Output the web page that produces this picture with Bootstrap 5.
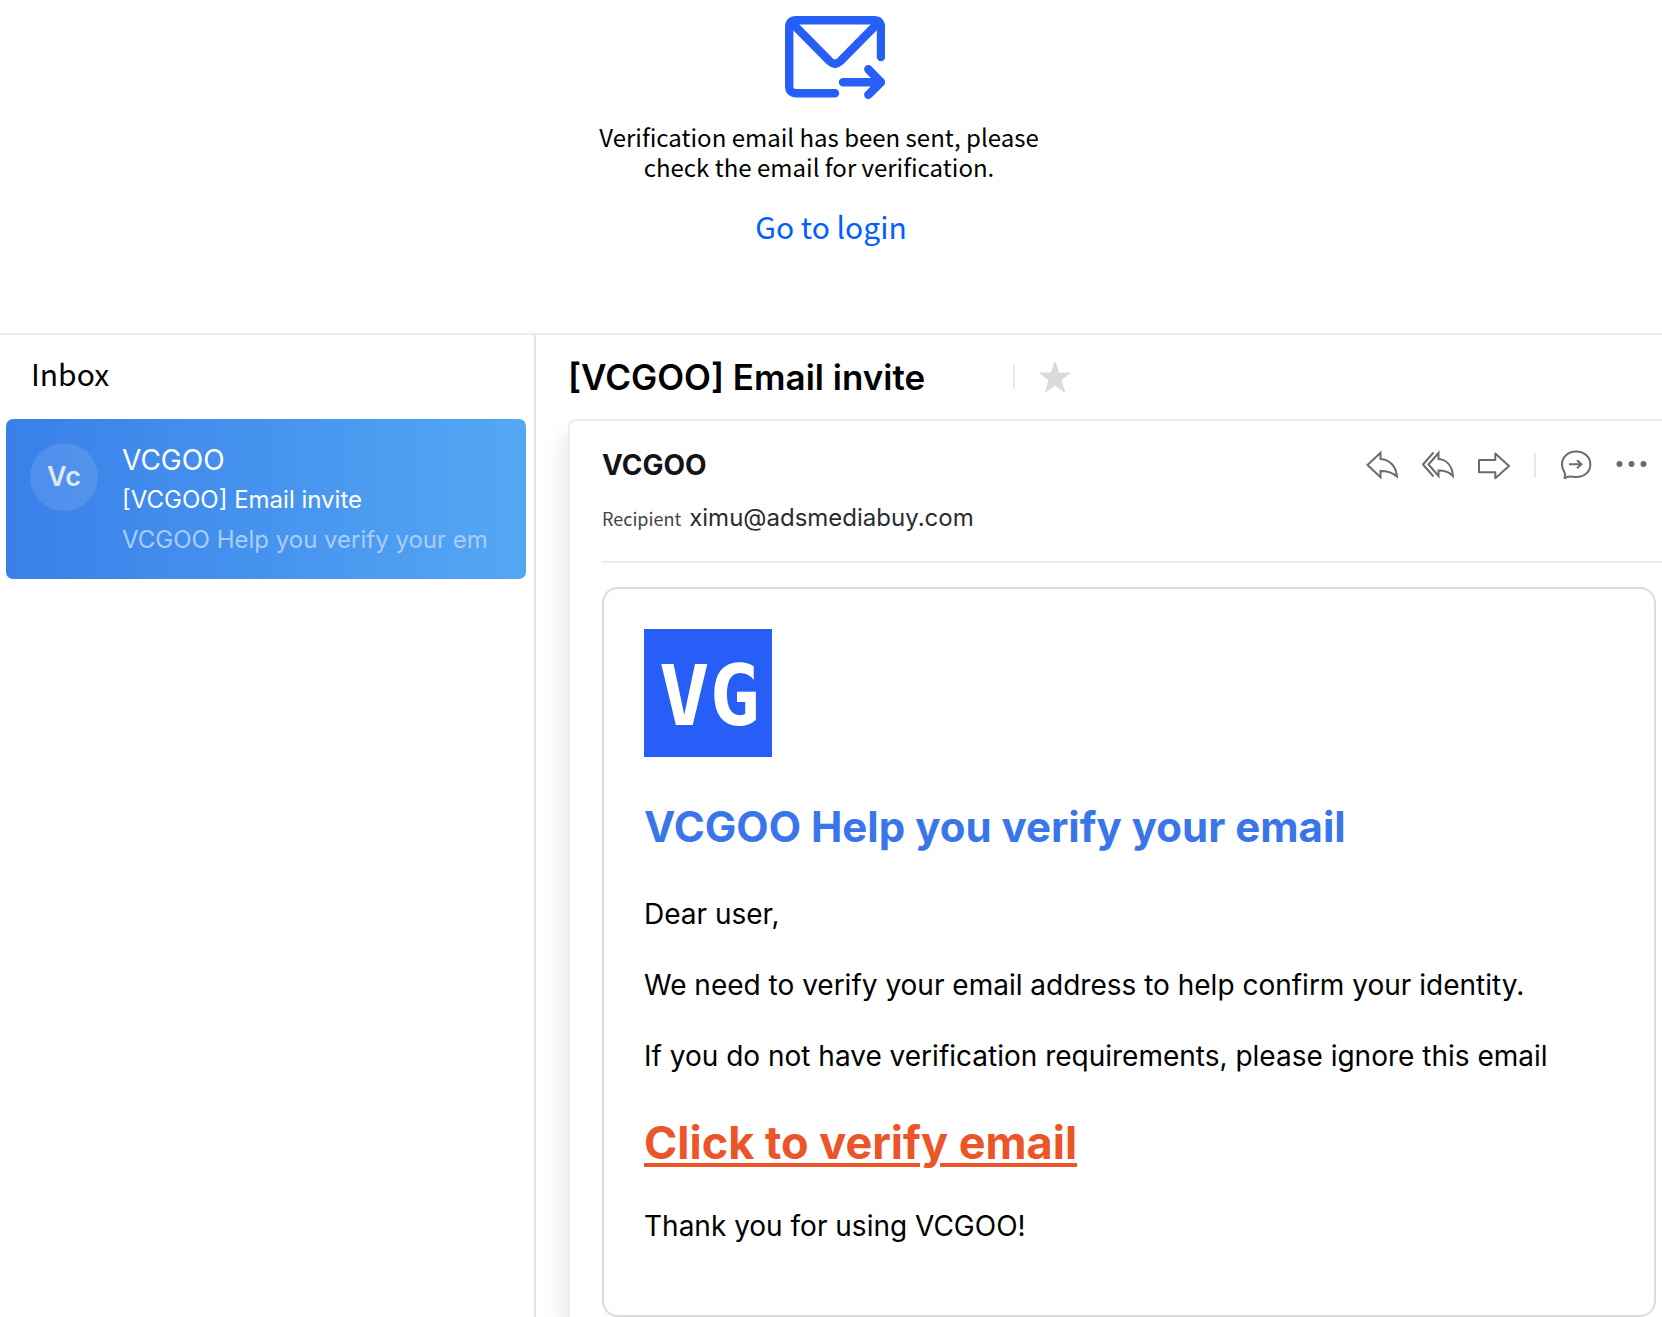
<!DOCTYPE html>
<html lang="en">
<head>
<meta charset="utf-8">
<meta name="viewport" content="width=device-width, initial-scale=1">
<title>Verify your email</title>
<link href="https://cdn.jsdelivr.net/npm/bootstrap@5.3.0/dist/css/bootstrap.min.css" rel="stylesheet">
<style>
body { font-family: Inter, "Noto Sans", sans-serif; color: #000; background: #fff; }
.cjk { font-family: "Noto Sans CJK SC", "Noto Sans", sans-serif; }
.notice { padding: 15px 0 87px; border-bottom: 2px solid #ececec; }
.notice-icon { width: 100px; height: 84px; }
.notice-text { font-size: 24px; line-height: 30px; margin: 23px 0 24px; }
.notice-link { font-size: 30px; line-height: 40px; color: #0060ff; }
.sidebar { flex: 0 0 536px; border-right: 2px solid #e4e4e6; padding: 18px 8px 0 6px; }
.sidebar-title { font-size: 30px; line-height: 40px; margin: 0 0 26px; padding-left: 25px; }
.mail-item { padding: 21px 24px 19px; border-radius: 7px; color: #fff; background: linear-gradient(90deg, #3980e9, #4693ef 50%, #54a8f3); }
.mail-item:hover { color: #fff; }
.avatar { flex: 0 0 68px; height: 68px; margin-top: 3px; font-size: 27px; font-weight: 600; color: #dde9fc; background: rgba(255,255,255,.11); }
.item-from { font-size: 28px; line-height: 40px; }
.item-line { font-size: 24px; line-height: 40px; }
.item-preview { color: #a9cdf8; }
.reader { padding: 20px 0 0 32px; overflow: hidden; }
.reader-head { gap: 24px; margin-bottom: 20px; }
.subject { font-size: 35px; line-height: 44px; font-weight: 600; margin-right: 64px; }
.rule-v { width: 2px; height: 24px; background: #e8e8ea; }
.tool { width: 32px; height: 32px; padding: 0; border: 0; background: none; color: #686c72; line-height: 0; }
.tool svg { width: 32px; height: 32px; fill: none; stroke: currentColor; stroke-width: 2; }
.message { border: 2px solid #ececee; border-width: 2px 0 0 2px; border-top-left-radius: 8px; padding: 24px 0 0 32px; box-shadow: -4px 16px 24px rgba(0,0,0,.1); }
.message-head { padding-right: 14px; }
.sender { font-size: 28px; line-height: 40px; font-weight: 700; color: #11151b; }
.tools { gap: 24px; }
.recipient { font-size: 24px; line-height: 32px; gap: 8px; margin-top: 17px; padding-bottom: 27px; border-bottom: 2px solid #ececec; color: #2a2c30; }
.recipient dt { font-size: 18px; font-weight: 400; color: #444; }
.letter { border: 2px solid #dcdcdc; border-radius: 16px; margin: 24px 6px 0 0; padding: 40px 40px 69px; font-size: 28px; line-height: 40px; }
.letter p { margin: 0 0 31px; }
.logo { display: block; width: 128px; height: 128px; }
.letter-title { font-size: 42px; line-height: 56px; font-weight: 700; color: #3a76ea; margin: 42px 0 39px; }
.letter .verify { font-size: 45px; line-height: 56px; font-weight: 700; margin: 39px 0 35px; }
.verify a { color: #eb5529; text-decoration-thickness: 4px; text-underline-offset: 4px; }
</style>
<script src="https://cdn.jsdelivr.net/npm/bootstrap@5.3.0/dist/js/bootstrap.bundle.min.js"></script>
</head>
<body>
<header class="notice text-center">
  <div class="ps-2">
    <svg class="notice-icon d-block mx-auto" viewBox="0 0 100 84" fill="none" stroke="#285ef8" stroke-width="8.4" stroke-linecap="round" stroke-linejoin="round" aria-hidden="true">
      <path d="M96 42V12Q96 5.2 89 5.2H11Q4.2 5.2 4.2 12V71Q4.2 78.2 11 78.2H50"/>
      <path d="M8 9L45 46.500Q50 51 55 46.500L92 9"/>
      <path d="M58 67.200H94M83.300 54.300L96 67.200L83.300 79.800"/>
    </svg>
  </div>
  <p class="notice-text cjk pe-4">Verification email has been sent, please<br>check the email for verification.</p>
  <a class="notice-link cjk d-inline-block text-decoration-none" href="#login">Go to login</a>
</header>
<div class="d-flex">
  <nav class="sidebar">
    <h1 class="sidebar-title cjk fw-normal">Inbox</h1>
    <a class="mail-item d-flex gap-4 text-decoration-none" href="#message">
      <span class="avatar rounded-circle d-flex align-items-center justify-content-center">Vc</span>
      <span class="d-block text-nowrap">
        <span class="item-from d-block">VCGOO</span>
        <span class="item-line d-block">[VCGOO] Email invite</span>
        <span class="item-line item-preview d-block">VCGOO Help you verify your em</span>
      </span>
    </a>
  </nav>
  <main class="reader flex-grow-1" id="message">
    <div class="reader-head d-flex align-items-center">
      <h2 class="subject mb-0">[VCGOO] Email invite</h2>
      <span class="rule-v"></span>
      <button class="tool" type="button" aria-label="Star"><svg viewBox="0 0 32 32"><path fill="#d9dadd" stroke="#d9dadd" stroke-width="1" stroke-linejoin="round" d="M16 1L19.700 12H31L22 19.200L25.500 31L16 24L6.500 31L10 19.200L1 12H12.300Z"/></svg></button>
    </div>
    <article class="message">
      <div class="message-head d-flex justify-content-between align-items-center">
        <span class="sender">VCGOO</span>
        <div class="tools d-flex align-items-center">
          <button class="tool" type="button" aria-label="Reply"><svg viewBox="0 0 32 32"><path d="M1.500 16L14.500 3.800V10C23.500 10.500 30 17 31 27.500C26 23 21 22 14.500 22V28.200Z"/></svg></button>
          <button class="tool" type="button" aria-label="Reply all"><svg viewBox="0 0 32 32"><path d="M11.500 3.500L1 15.500L11.500 27.500M6.500 15.500L16.500 4V10C24 10.500 30 16 31 27C27 22.500 22 21.500 16.500 21.500V27Z"/></svg></button>
          <button class="tool" type="button" aria-label="Forward"><svg viewBox="0 0 32 32"><path stroke-linejoin="round" d="M1 11H17.300V4.500L31 17L17.300 29.300V23.300H1Z"/></svg></button>
          <span class="rule-v"></span>
          <button class="tool" type="button" aria-label="Forward to chat"><svg viewBox="0 0 32 32"><path stroke-linejoin="round" d="M4.500 29C5.500 27 5.500 25.500 4.600 23.500C2.800 21 2 18.500 2 15.500C2 8 8 2.600 16 2.600C24.500 2.600 30.300 8 30.300 15.500C30.300 23 24.500 28 16 28C13 28 11 27 8.500 27.800Z"/><path d="M9 15.300H21.500M17 11.300L21.500 15.300L17 19.300"/></svg></button>
          <button class="tool" type="button" aria-label="More"><svg viewBox="0 0 32 32"><g fill="currentColor" stroke="none"><circle cx="3.500" cy="15" r="3"/><circle cx="15.500" cy="15" r="3"/><circle cx="27.500" cy="15" r="3"/></g></svg></button>
        </div>
      </div>
      <dl class="recipient d-flex align-items-baseline mb-0">
        <dt class="cjk">Recipient</dt>
        <dd class="mb-0">ximu@adsmediabuy.com</dd>
      </dl>
      <div class="letter">
        <svg class="logo" viewBox="0 0 128 128" role="img" aria-label="VG"><rect width="128" height="128" fill="#285ef8"/><text x="15" y="96" font-family="'DejaVu Sans Mono', monospace" font-weight="700" font-size="84" fill="#fff">VG</text></svg>
        <h3 class="letter-title">VCGOO Help you verify your email</h3>
        <p>Dear user,</p>
        <p>We need to verify your email address to help confirm your identity.</p>
        <p>If you do not have verification requirements, please ignore this email</p>
        <p class="verify"><a href="#verify">Click to verify email</a></p>
        <p class="mb-0">Thank you for using VCGOO!</p>
      </div>
    </article>
  </main>
</div>
</body>
</html>
